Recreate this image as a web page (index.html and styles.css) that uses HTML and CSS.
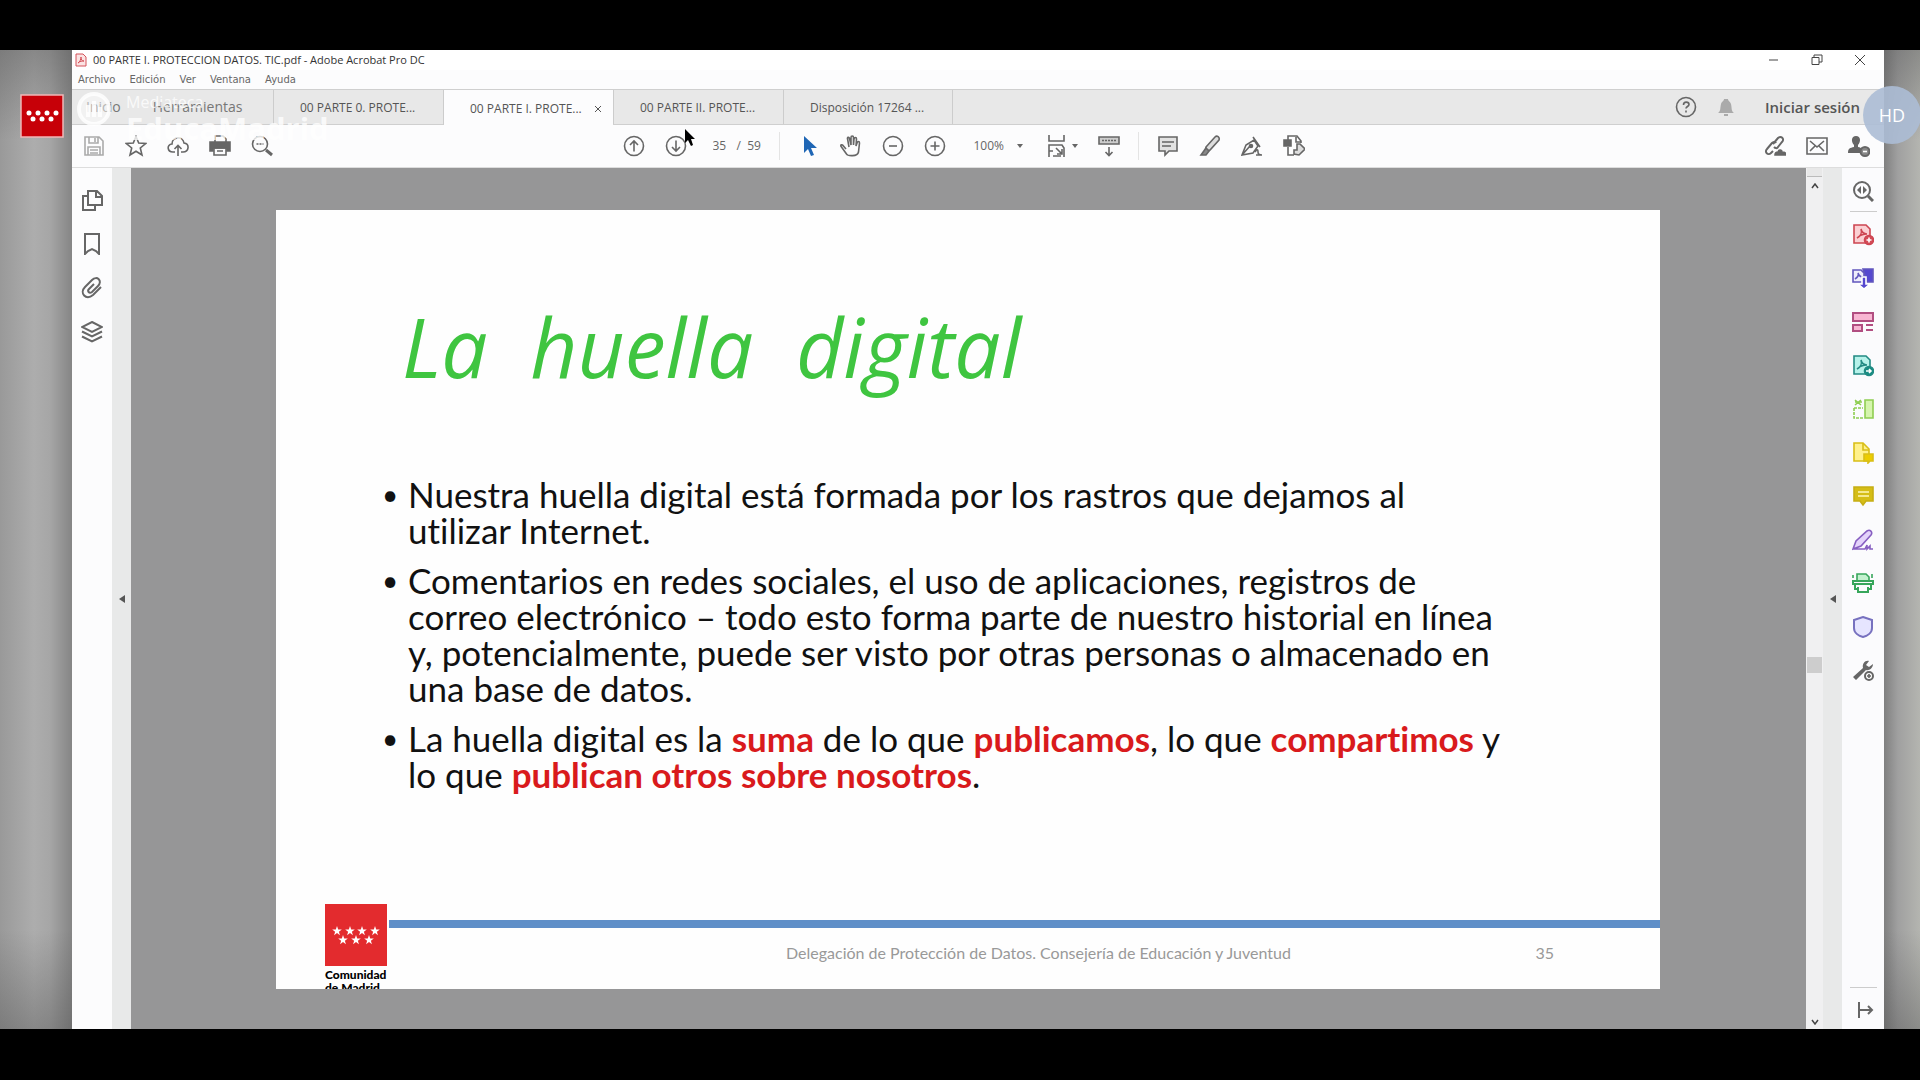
FILE: index.html
```
<!DOCTYPE html>
<html lang="es">
<head>
<meta charset="utf-8">
<title>00 PARTE I. PROTECCION DATOS. TIC.pdf - Adobe Acrobat Pro DC</title>
<link rel="stylesheet" href="styles.css">
</head>
<body>
<div class="stage">
  <main class="window">
    <header class="titlebar">
      <svg class="doc-icon" viewBox="0 0 12 14"><path d="M1 1h7l3 3v9H1z" fill="#fbe3e3" stroke="#d4525a"/><path d="M3 10c2-1 3-4 3-6 0 3 1 4 3 4-2 0-4 0-6 2z" fill="none" stroke="#d4525a"/></svg>
      <span class="title">00 PARTE I. PROTECCION DATOS. TIC.pdf - Adobe Acrobat Pro DC</span>
      <div class="window-buttons">
        <button aria-label="Minimizar"><svg viewBox="0 0 12 12"><path d="M1 6h9"/></svg></button>
        <button aria-label="Restaurar"><svg viewBox="0 0 12 12"><path d="M1 3.500h7v7H1zM3 3V1h8v7H8"/></svg></button>
        <button aria-label="Cerrar"><svg viewBox="0 0 12 12"><path d="M1 1l10 10M11 1L1 11"/></svg></button>
      </div>
    </header>
    <nav class="menu">
      <button>Archivo</button><button>Edición</button><button>Ver</button><button>Ventana</button><button>Ayuda</button>
    </nav>
    <nav class="tabs">
      <div class="home-tabs"><button>Inicio</button><button>Herramientas</button></div>
      <button class="tab">00 PARTE 0. PROTE...</button>
      <button class="tab active">00 PARTE I. PROTE... <svg class="close" viewBox="0 0 8 8"><path d="M1 1l6 6M7 1L1 7"/></svg></button>
      <button class="tab">00 PARTE II. PROTE...</button>
      <button class="tab">Disposición 17264 ...</button>
      <div class="account">
        <button aria-label="Ayuda"><svg class="ico" viewBox="0 0 22 22"><circle cx="11" cy="11" r="9.500"/><path d="M8.500 9c0-4 5.500-3.500 5.500-.5 0 2-3 2-3 4M11 14.500v2"/></svg></button>
        <button aria-label="Notificaciones"><svg class="ico bell" viewBox="0 0 22 22"><path d="M3 17c3-2 2-5 3-9 1-3 3-3 3-5h4c0 2 2 2 3 5 1 4 0 7 3 9zM9 18h4v2H9z"/></svg></button>
        <button class="login">Iniciar sesión</button>
      </div>
    </nav>
    <div class="toolbar">
      <div class="group">
        <button aria-label="Guardar"><svg class="ico light" viewBox="0 0 22 22"><path d="M2 2h14l4 4v14H2zM6 2v6h9V2M12 3v4M5 20v-8h12v8M7 15h8M7 18h8"/></svg></button>
        <button aria-label="Favorito"><svg class="ico" viewBox="0 0 22 22"><path d="M11 1.500l2.700 6.500 7 .5-5.400 4.500 1.700 7-6-3.800-6 3.800 1.700-7L1.300 8.500l7-.5z"/></svg></button>
        <button aria-label="Subir a la nube"><svg class="ico" viewBox="0 0 22 22"><path d="M8 17H6C0 17-.5 9.500 5 9c0-8 11-8 12-1 6 1 5 9-1 9h-2M11 21v-10M7.500 14L11 10.500l3.500 3.500"/></svg></button>
        <button aria-label="Imprimir"><svg class="ico" viewBox="0 0 22 22"><path d="M6 7V1h8l3 3v3"/><path d="M1 7h20v9h-3v-3H4v3H1z" fill="#666"/><path d="M5 13h12v7H5zM8 16h6"/></svg></button>
        <button aria-label="Buscar"><svg class="ico" viewBox="0 0 22 22"><circle cx="9" cy="9" r="7.500"/><path d="M5.500 9h7" stroke-dasharray="2 1"/><path d="M15 15l6 5" stroke-width="3"/></svg></button>
      </div>
      <div class="group center">
        <button aria-label="Página anterior"><svg class="ico" viewBox="0 0 22 22"><circle cx="11" cy="11" r="9.500"/><path d="M11 16.500V6M7 10l4-4 4 4"/></svg></button>
        <button aria-label="Página siguiente"><svg class="ico" viewBox="0 0 22 22"><circle cx="11" cy="11" r="9.500"/><path d="M11 5.500V16M7 12l4 4 4-4"/></svg></button>
        <div class="pages"><input aria-label="Página" value="35"><span>/&nbsp; 59</span></div>
        <i class="rule"></i>
        <button aria-label="Seleccionar"><svg class="ico" viewBox="0 0 22 22"><path d="M6 1v17l4-4 3 7 3-1-3-7h6z" fill="#1f66b5" stroke="none"/></svg></button>
        <button aria-label="Mano"><svg class="ico" viewBox="0 0 22 22"><path d="M6 14L2.500 10c-2-1-2 1-1 2l5 7c1 2 11 3 12-2l1-9c0-2-2-2-2.500 0L16 11l.5-7c0-2-2-2-2.500 0l-.5 6V2.500c0-2-2.500-2-2.500 0V10L9.500 3.500c-.5-2-2.500-1-2 0L9 12"/></svg></button>
        <button aria-label="Reducir"><svg class="ico" viewBox="0 0 22 22"><circle cx="11" cy="11" r="9.500"/><path d="M7 11h8"/></svg></button>
        <button aria-label="Ampliar"><svg class="ico" viewBox="0 0 22 22"><circle cx="11" cy="11" r="9.500"/><path d="M6.500 11h9M11 6.500v9"/></svg></button>
        <button class="zoom">100% <svg class="caret" viewBox="0 0 6 4"><path d="M0 0h6L3 4z"/></svg></button>
        <button class="fit" aria-label="Ajustar"><svg class="ico" viewBox="0 0 22 22"><path d="M3 0v6h15V0M3 22V10h13l2 3v9M3 16h4M10 13l6 6M16 14v5h-5M7 21h8" /></svg><svg class="caret" viewBox="0 0 6 4"><path d="M0 0h6L3 4z"/></svg></button>
        <button aria-label="Desplazamiento"><svg class="ico" viewBox="0 0 22 22"><path d="M1 2h20v7H1z" fill="#ccc"/><path d="M4 5.500h14" stroke-dasharray="2 1"/><path d="M11 12v8M7.500 17l3.500 3.500 3.500-3.500"/></svg></button>
        <i class="rule"></i>
        <button aria-label="Comentar"><svg class="ico" viewBox="0 0 22 22"><path d="M2 2h18v14h-8l-4 4v-4H2z" fill="#e2e2e2"/><path d="M5 7h12M5 11h9"/></svg></button>
        <button aria-label="Resaltar"><svg class="ico" viewBox="0 0 22 22"><path d="M7 12L16 2c2-2 5 0 4 3l-9 10-5 2z" fill="#ddd"/><path d="M7 13l-5 7h5l3-4z" fill="#888"/></svg></button>
        <button aria-label="Firmar"><svg class="ico" viewBox="0 0 22 22"><path d="M1 20L5 10l8-5 4 6-5 7zM1 20l8-9M12 2l7 10M14 17c2-3 3-3 3 0 0 2 2 3 4 3h-6"/><circle cx="10" cy="11" r="1.500" fill="#666"/></svg></button>
        <button aria-label="Exportar"><svg class="ico" viewBox="0 0 22 22"><path d="M5 5V1h9l4 5v2M13 2v5h5M5 12v8h6"/><path d="M1 5h7v6H1z" fill="#666"/><path d="M11 19v-4h3V9h3l5 5-6 6z" fill="#ddd"/></svg></button>
      </div>
      <div class="group end">
        <button aria-label="Compartir vínculo"><svg class="ico" viewBox="0 0 22 22"><path d="M9 9l5-6c3-3 7 1 4 4l-4 5c-1 2-3 1-4 0M12 8c-1-2-3-1-4 0l-5 6c-3 3 1 7 4 4l2-2" stroke-width="2"/><path d="M11 20c0-3 2-3 3-3 1-3 4-2 4 0 2 0 4 1 4 3z" fill="#666"/></svg></button>
        <button aria-label="Correo"><svg class="ico" viewBox="0 0 22 22"><path d="M1 3h20v16H1zM4 6l7 6 7-6M4 16l5-5M18 16l-5-5"/></svg></button>
        <button aria-label="Compartir"><svg class="ico" viewBox="0 0 22 22"><path d="M8 1c5 0 5 6 2 9v2c2 0 3 1 4 2v4H0c0-5 2-5 6-6v-2C3 7 3 1 8 1z" fill="#666" stroke="none"/><circle cx="17" cy="16.500" r="4.500" fill="#888" stroke-width="2"/><path d="M15 16.500h4" stroke="#fff"/></svg></button>
      </div>
    </div>
    <div class="workspace">
      <aside class="rail left">
        <button aria-label="Miniaturas"><svg class="ico" viewBox="0 0 22 22"><path d="M7 2h9l5 5v9H7zM15 2v6h6M7 7H2v14h12v-5" stroke-width="2"/></svg></button>
        <button aria-label="Marcadores"><svg class="ico" viewBox="0 0 22 22"><path d="M4 1h14v20l-3-3-4-2-4 2-3 3z" stroke-width="2"/></svg></button>
        <button aria-label="Adjuntos"><svg class="ico" viewBox="0 0 22 22"><path d="M20 10l-8 8c-7 6-14-2-8-8l7-7c5-5 11 1 6 6l-6 6c-3 2-5-1-3-3l5-5" stroke-width="2"/></svg></button>
        <button aria-label="Capas"><svg class="ico" viewBox="0 0 22 22"><path d="M11 1l10 5-10 5L1 6zM1 10.500l10 5 10-5M1 15.500l10 5 10-5" stroke-width="2"/></svg></button>
      </aside>
      <button class="strip" aria-label="Mostrar panel izquierdo"><svg viewBox="0 0 6 8"><path d="M6 0v8L0 4z"/></svg></button>
      <section class="canvas">
        <article class="slide">
          <h1>La  huella  digital</h1>
          <ul>
            <li>Nuestra huella digital está formada por los rastros que dejamos al<br>utilizar Internet.</li>
            <li>Comentarios en redes sociales, el uso de aplicaciones, registros de<br>correo electrónico – todo esto forma parte de nuestro historial en línea<br>y, potencialmente, puede ser visto por otras personas o almacenado en<br>una base de datos.</li>
            <li>La huella digital es la <b>suma</b> de lo que <b>publicamos</b>, lo que <b>compartimos</b> y<br>lo que <b>publican otros sobre nosotros</b>.</li>
          </ul>
          <footer>
            <div class="brand">
              <svg viewBox="0 0 62 62"><defs><path id="star" d="M0-5l1.200 3.400 3.600.1-2.900 2.200 1 3.500L0 2.100l-2.900 2.100 1-3.500-2.900-2.200 3.600-.1z"/></defs><path fill="#e32b2e" d="M0 0h62v62H0z"/><g fill="#fff"><use href="#star" x="12" y="27"/><use href="#star" x="25" y="27"/><use href="#star" x="37" y="27"/><use href="#star" x="50" y="27"/><use href="#star" x="18" y="36"/><use href="#star" x="31" y="36"/><use href="#star" x="44" y="36"/></g></svg>
              <span>Comunidad<br>de Madrid</span>
            </div>
            <div class="foot">
              <p>Delegación de Protección de Datos. Consejería de Educación y Juventud</p>
              <span>35</span>
            </div>
          </footer>
        </article>
      </section>
      <div class="scroll">
        <i class="cap"></i>
        <svg viewBox="0 0 8 6"><path d="M1 5l3-4 3 4"/></svg>
        <i class="track"></i><i class="thumb"></i><i class="track low"></i>
        <svg viewBox="0 0 8 6"><path d="M1 1l3 4 3-4"/></svg>
      </div>
      <button class="strip" aria-label="Mostrar panel derecho"><svg viewBox="0 0 6 8"><path d="M6 0v8L0 4z"/></svg></button>
      <aside class="rail right">
        <button aria-label="Buscar herramientas"><svg class="ico" viewBox="0 0 22 22"><circle cx="10" cy="10" r="8" stroke-width="2"/><path d="M16 16l5 5" stroke-width="3"/><path d="M9 6v8L5 10zM11 6v8l4-4z" fill="#666" stroke="none"/></svg></button>
        <hr>
        <div class="tools">
          <button aria-label="Crear PDF"><svg class="ico red" viewBox="0 0 22 22"><path d="M2 1h12l4 4v14H2z" fill="#fbd0d3"/><path d="M5 14c4-2 5-6 4-9 1 4 3 5 6 5-4 0-7 1-10 4"/><circle cx="17" cy="16" r="4.500" fill="#d44b57"/><path d="M14.500 16h5M17 13.500v5" stroke="#fff"/></svg></button>
          <button aria-label="Combinar archivos"><svg class="ico indigo" viewBox="0 0 22 22"><path d="M11 1h10v13h-6z" fill="#5548cf"/><path d="M1 2h8l3 3v9H1z" fill="#eeedfb"/><path d="M3 11c3-2 4-4 3-6 1 3 2 4 5 4"/><path d="M10 9h4v7h4l-6 5-6-5h4z" fill="#5548cf" stroke="#fff"/></svg></button>
          <button aria-label="Organizar páginas"><svg class="ico pink" viewBox="0 0 22 22"><path d="M1 2h20v8H1zM1 14h9v6H1z" fill="#f8b5d2" stroke-width="2"/><path d="M14 14h7M14 19h7" stroke-width="2"/></svg></button>
          <button aria-label="Exportar PDF"><svg class="ico teal" viewBox="0 0 22 22"><path d="M2 1h12l4 4v14H2z" fill="#b6f2ea"/><path d="M5 14c4-2 5-6 4-9 1 4 3 5 6 5-4 0-7 1-10 4"/><circle cx="17" cy="16" r="4.500" fill="#168d83"/><path d="M14 16h5M17 14l2 2-2 2" stroke="#fff"/></svg></button>
          <button aria-label="Editar PDF"><svg class="ico lime" viewBox="0 0 22 22"><path d="M13 2h8v18h-8z" fill="#d5f5ad"/><path d="M2 10h9M2 10v10h9" stroke-dasharray="3 1"/><path d="M3 2l6 5M9 2L3 7M3 4h7"/></svg></button>
          <button aria-label="Comentar archivo"><svg class="ico yellow" viewBox="0 0 22 22"><path d="M2 1h9l6 6v12H2z" fill="#fff18c"/><path d="M11 1v7h6"/><path d="M12 12h9v7h-3l-2 2v-2h-4z" fill="#eccd00"/></svg></button>
          <button aria-label="Comentario"><svg class="ico gold" viewBox="0 0 22 22"><path d="M2 2h19v14h-7l-3 4-3-4H2z" fill="#d5bd16"/><path d="M6 7h11M6 11h11" stroke="#fff6b8"/></svg></button>
          <button aria-label="Rellenar y firmar"><svg class="ico purple" viewBox="0 0 22 22"><path d="M1 20l3-8L15 2c3-2 6 1 4 4L9 17zM1 20h12l2-4v4l3-3v3h3" fill="#e4d3fb"/></svg></button>
          <button aria-label="Digitalizar"><svg class="ico green" viewBox="0 0 22 22"><path d="M5 9V2h9l3 3v4M1 3v3M20 2v4" fill="#c3f1cf"/><path d="M1 9h20v3H1zM3 12v5h3M19 12v5h-3M6 15v5h10v-5" stroke-width="2"/></svg></button>
          <button aria-label="Proteger"><svg class="ico violet" viewBox="0 0 22 22"><path d="M11 1l9 3v8c0 5-5 8-9 9-4-1-9-4-9-9V4z" fill="#e6e5ff" stroke-width="2"/></svg></button>
          <button aria-label="Más herramientas"><svg class="ico" viewBox="0 0 22 22"><path d="M1 18L11 9c-1-4 2-8 6-7l-3 4 3 2 4-3c0 4-4 7-7 6L4 21z" fill="#666" stroke="none"/><circle cx="17" cy="17" r="4" stroke-width="2" fill="#fff"/><path d="M15 17h4M17 15v4"/></svg></button>
        </div>
        <hr class="last">
        <button aria-label="Contraer"><svg class="ico" viewBox="0 0 22 22"><path d="M7 3v16M8 11h12M16 7l4 4-4 4" stroke-width="2"/></svg></button>
      </aside>
    </div>
  </main>
  <svg class="badge-logo" viewBox="0 0 44 44"><path d="M1 1h42v42H1z" fill="#c70008" stroke="#f1b7b7" stroke-width="1.500"/><g fill="#fff"><circle cx="9" cy="19" r="2.500"/><circle cx="18" cy="19" r="2.500"/><circle cx="27" cy="19" r="2.500"/><circle cx="36" cy="19" r="2.500"/><circle cx="13" cy="25" r="2.500"/><circle cx="22" cy="25" r="2.500"/><circle cx="31" cy="25" r="2.500"/></g></svg>
  <div class="watermark">
    <svg viewBox="0 0 44 44"><circle cx="18" cy="18" r="15"/><path d="M12 26V14M18 26V10M24 26V16"/></svg>
    <div><small>Mediateca</small><strong>EducaMadrid</strong></div>
  </div>
  <div class="hd">HD</div>
  <svg class="pointer" viewBox="0 0 12 18"><path d="M1 0v14l3-3 3 6 2-1-2-6h4z"/></svg>
</div>
</body>
</html>
```
FILE: styles.css
```
* { box-sizing: border-box; }
body {
  margin: 0;
  padding: 50px 0 51px;
  min-height: 100vh;
  display: flex;
  background: #000;
  color: #444;
  font: 12px/16px "Open Sans", "Noto Sans", sans-serif;
}
button { border: 0; padding: 0; background: none; color: inherit; font: inherit; display: flex; align-items: center; }
svg { display: block; flex: none; }
.ico { width: 22px; height: 22px; fill: none; stroke: #666; stroke-width: 1.6; }
.ico.light { stroke: #aaa; }
.caret { width: 6px; height: 4px; fill: #666; }

.stage {
  position: relative;
  flex: 1;
  display: flex;
  padding: 0 36px 0 72px;
  overflow: hidden;
  background:
    linear-gradient(180deg, rgba(80,80,80,.4), transparent 90px, transparent 880px, rgba(80,80,80,.4)),
    linear-gradient(90deg, #999 0, #adadad 34px, #a6a6a6 50px, #858585 72px, #808080 calc(100% - 36px), #a0a0a0 calc(100% - 22px), #b4b5b0 100%);
}
.window { flex: 1; min-width: 0; display: flex; flex-direction: column; background: #fcfcfd; }

.titlebar { display: flex; align-items: center; height: 20px; padding: 0 18px 0 3px; gap: 6px; background: #fff; }
.doc-icon { width: 12px; height: 14px; }
.title { font-size: 11px; color: #333; }
.window-buttons { margin-left: auto; display: flex; gap: 31px; }
.window-buttons svg { width: 12px; height: 12px; fill: none; stroke: #444; }
.menu { display: flex; height: 19px; padding: 1px 0 0 6px; gap: 14px; font: 10px/18px "DejaVu Sans", sans-serif; color: #666; }

.tabs { display: flex; height: 36px; background: #e8e8e8; border: solid #cfcfcf; border-width: 1px 0; }
.home-tabs { width: 201px; padding-left: 14px; display: flex; gap: 32px; font-size: 14px; color: #777; }
.tab { width: 170px; padding: 2px 0 0 26px; justify-content: flex-start; white-space: nowrap; border-left: 1px solid #ccc; color: #555; }
.tab:last-of-type { border-right: 1px solid #ccc; }
.tab.active { background: #fcfcfd; margin-bottom: -1px; }
.close { width: 8px; height: 8px; margin-left: 12px; fill: none; stroke: #555; }
.account { margin-left: auto; padding-right: 24px; display: flex; gap: 18px; }
.bell { fill: #aaa; stroke: none; }
.login { font-size: 15px; font-weight: 600; color: #555; padding-left: 10px; }

.toolbar { display: grid; grid-template-columns: 1fr auto 1fr; align-items: center; height: 42px; padding: 0 14px 0 11px; }
.group { display: flex; align-items: center; gap: 20px; }
.center { margin-right: 26px; }
.end { justify-content: flex-end; }
.pages { display: flex; width: 54px; padding-left: 6px; gap: 4px; color: #666; white-space: nowrap; }
.pages input { width: 20px; border: 0; padding: 0; background: none; font: inherit; color: inherit; }
.rule { width: 1px; height: 28px; background: #e4e4e4; margin: 0 -2px; }
.zoom { width: 60px; padding-left: 8px; gap: 13px; color: #666; }
.fit { gap: 4px; }

.workspace { flex: 1; display: flex; border-top: 1px solid #ddd; }
.rail { display: flex; flex-direction: column; align-items: center; }
.left { width: 40px; padding-top: 21px; gap: 22px; }
.strip { width: 19px; background: #e8e9e9; justify-content: center; }
.strip svg { width: 6px; height: 8px; fill: #555; }
.canvas { flex: 1; min-width: 0; padding: 42px 146px 40px 145px; display: flex; background: #969697; }
.slide { flex: 1; min-width: 0; display: flex; flex-direction: column; overflow: hidden; background: #fefefe; }
.slide h1 { margin: 90px 0 0 126px; font: italic 400 82px/92px "Open Sans", sans-serif; color: #3fc540; white-space: pre; }
.slide ul { margin: 84px 0 0 132px; padding: 0; list-style: none; display: grid; gap: 14px; font: 35px/36px Lato, sans-serif; font-variant-ligatures: none; color: #111; white-space: nowrap; }
.slide li { position: relative; }
.slide li::before { content: "•"; position: absolute; left: -26px; font-size: 28px; }
.slide b { color: #d91a1c; }
.slide footer { margin-top: auto; height: 85px; padding-left: 49px; display: flex; gap: 2px; }
.brand { width: 62px; color: #000; font: 900 12px/13px Lato, sans-serif; white-space: nowrap; }
.brand svg { width: 62px; height: 62px; margin-bottom: 2px; }
.foot { flex: 1; margin-top: 16px; padding: 15px 106px 0 397px; border-top: 8px solid #5f8fc8; display: flex; justify-content: space-between; align-items: flex-start; font: 16px/20px Lato, sans-serif; color: #999; white-space: nowrap; }
.foot p { margin: 0; }

.scroll { width: 17px; display: flex; flex-direction: column; align-items: center; background: #f0f0f1; padding-bottom: 4px; }
.scroll svg { width: 8px; height: 6px; fill: none; stroke: #444; stroke-width: 1.5; }
.cap { width: 15px; height: 9px; margin-bottom: 6px; border-bottom: 1px solid #bbb; background: #e8e8e8; }
.track { flex: 467; }
.track.low { flex: 345; }
.thumb { width: 15px; height: 16px; background: #cdcdcd; }

.right { width: 42px; padding: 12px 0 8px; background: #fbfbfd; }
.rail hr { width: 27px; height: 1px; margin: 9px 0 12px; border: 0; background: #ccc; }
.rail .last { margin: auto 0 11px; }
.tools { height: 457px; display: flex; flex-direction: column; justify-content: space-between; }
.red { stroke: #cd4652; }
.indigo { stroke: #6257bd; }
.pink { stroke: #b14e81; }
.teal { stroke: #238b84; }
.lime { stroke: #8fce52; }
.yellow { stroke: #d9be17; }
.gold { stroke: #c6ae15; }
.purple { stroke: #875fc1; }
.green { stroke: #37a65b; }
.violet { stroke: #7771bf; }

.badge-logo { position: absolute; left: 20px; top: 44px; width: 44px; height: 44px; }
.watermark { position: absolute; left: 76px; top: 41px; display: flex; gap: 6px; color: rgba(255,255,255,.8); }
.watermark svg { width: 44px; height: 44px; fill: rgba(255,255,255,.45); stroke: rgba(255,255,255,.8); stroke-width: 4; }
.watermark small { display: block; font-size: 16px; line-height: 22px; }
.watermark strong { display: block; font-size: 31px; line-height: 30px; }
.hd { position: absolute; right: -1px; top: 36px; width: 58px; height: 58px; border-radius: 50%; background: rgba(172,188,213,.9); color: #fff; text-align: center; font: 18px/58px "Open Sans", sans-serif; }
.pointer { position: absolute; left: 684px; top: 79px; width: 12px; height: 18px; fill: #000; }
```
